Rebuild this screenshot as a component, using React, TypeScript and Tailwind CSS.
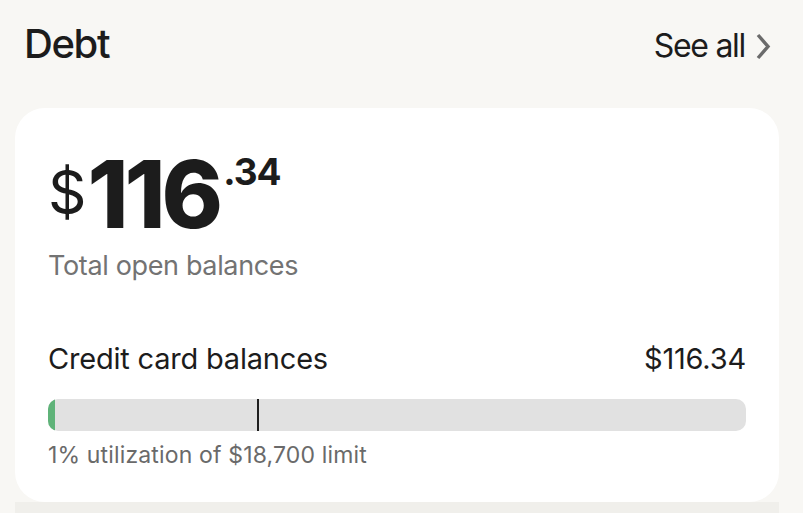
export default function App() {
    return (
        <div className="w-[803px] h-[513px] overflow-hidden bg-[#f8f7f4] font-['Inter','Lato',sans-serif] text-[#1c1c1c]">
            <header className="flex items-start justify-between pl-[24px] pr-[32px] pt-[20px] h-[108px]">
                <h2 className="text-[40px] leading-[48px] font-medium tracking-[-1.4px]">Debt</h2>
                <button className="flex items-start gap-[10px] mt-[6px]">
                    <span className="text-[32px] leading-[40px] font-normal tracking-[-1.3px]">See all</span>
                    <svg width="16" height="28" viewBox="0 0 16 28" fill="none" className="mt-[7px]">
                        <path d="M3 2 L13 13.5 L3 25" stroke="#6b6b6b" strokeWidth="3.4" strokeLinecap="butt" strokeLinejoin="miter" />
                    </svg>
                </button>
            </header>

            <div className="flex">
                <div className="w-[15px] shrink-0" />
                <div className="flex-1">
                    <section className="w-[764px] h-[394px] bg-white rounded-[30px] px-[33px] pt-[44px]">
                        <div className="flex items-start h-[90px]">
                            <span className="text-[60px] leading-[62px] mt-[9px] font-normal">$</span>
                            <span className="ml-[1px] text-[93px] leading-[84px] font-extrabold tracking-[-4px]">116</span>
                            <span className="ml-[4px] mt-[1px] text-[37px] leading-[38px] font-bold tracking-[-1px]">.34</span>
                        </div>
                        <p className="mt-[8px] text-[27px] leading-[32px] text-[#737373] tracking-[-0.35px]">Total open balances</p>

                        <div className="mt-[59px] flex items-center justify-between">
                            <span className="text-[29px] leading-[36px] tracking-[-0.2px]">Credit card balances</span>
                            <span className="text-[29px] leading-[36px] tracking-[-0.2px]">$116.34</span>
                        </div>
                        <div className="relative mt-[22px] h-[32px] rounded-[10px] bg-[#e1e1e1] overflow-hidden">
                            <div className="absolute left-0 top-0 h-full w-[7px] bg-[#5fb379]" />
                            <div className="absolute left-[209px] top-0 h-full w-[2px] bg-[#1e1e1e]" />
                        </div>
                        <p className="mt-[10px] text-[23px] leading-[28px] text-[#6a6a6a] tracking-[0.15px]">1% utilization of $18,700 limit</p>
                    </section>
                    <div className="h-[11px] bg-[#f0efeb] w-[764px]" />
                </div>
            </div>
        </div>
    )
}
